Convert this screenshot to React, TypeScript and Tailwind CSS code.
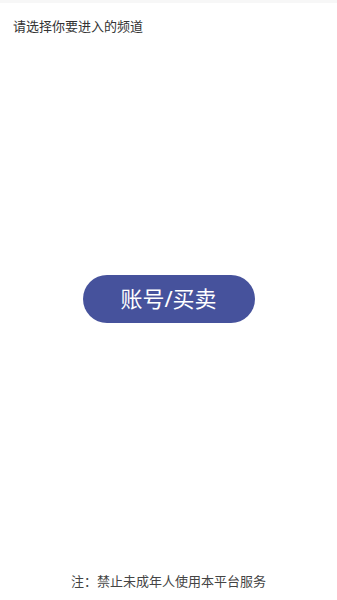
export default function App() {
  return (
    <div
      className="flex h-[600px] w-full flex-col bg-white"
      style={{ fontFamily: '"Noto Sans", "Noto Sans CJK SC", sans-serif' }}
    >
      <div className="h-[3px] w-full bg-[#f7f7f7]" />
      <div className="px-[13px] pt-[14px] text-[13px] leading-[18px] text-[#333333]">
        请选择你要进入的频道
      </div>
      <div className="flex flex-1 items-center justify-center pb-[10px]">
        <button className="flex h-[48px] w-[172px] items-center justify-center rounded-full bg-[#46529c] text-[22px] text-white">
          账号/买卖
        </button>
      </div>
      <div className="pb-[10px] text-center text-[13px] leading-[18px] text-[#444444]">
        注：禁止未成年人使用本平台服务
      </div>
    </div>
  );
}
